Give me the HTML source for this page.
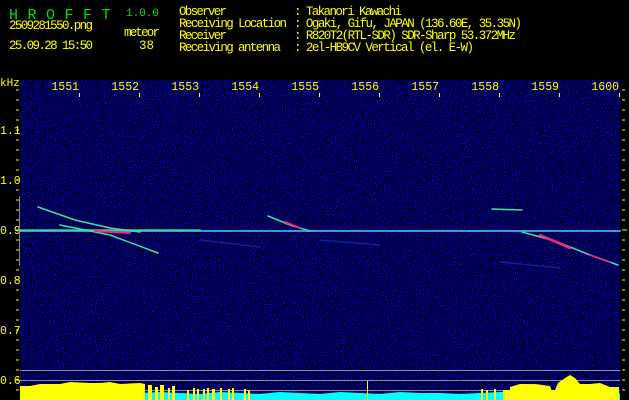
<!DOCTYPE html>
<html><head><meta charset="utf-8"><style>
html,body{margin:0;padding:0;background:#000;width:629px;height:400px;overflow:hidden}
svg{display:block}
text{font-family:"Liberation Mono","DejaVu Sans Mono",monospace}
</style></head><body>
<svg width="629" height="400" viewBox="0 0 629 400" xmlns="http://www.w3.org/2000/svg">
<defs>
<filter id="n" x="0" y="0" width="100%" height="100%">
<feTurbulence type="fractalNoise" baseFrequency="0.9" numOctaves="1" seed="3"/>
<feColorMatrix type="matrix" values="0 0 0 0 0  0 0 0 0 0  3.5 0 0 0 -1.65  0 0 0 0 1"/>
</filter>
</defs>
<rect width="629" height="400" fill="#000"/>
<rect x="20" y="80" width="600" height="320" filter="url(#n)"/>
<!-- header -->
<text x="9" y="19" fill="#00e000" font-size="15" letter-spacing="9.5">HROFFT</text>
<text x="126" y="16" fill="#00e000" font-size="11">1.0.0</text>
<g fill="#ffff00" font-size="12.5">
<text x="9" y="29" textLength="84">2509281550.png</text>
<text x="124" y="36" textLength="36">meteor</text>
<text x="9" y="49" textLength="84">25.09.28 15:50</text>
<text x="139" y="49">38</text>
<text x="179" y="15" textLength="48">Observer</text>
<text x="179" y="27" textLength="108">Receiving Location</text>
<text x="179" y="39" textLength="48">Receiver</text>
<text x="179" y="51" textLength="102">Receiving antenna</text>
<text x="294" y="15" textLength="108">: Takanori Kawachi</text>
<text x="294" y="27" textLength="228">: Ogaki, Gifu, JAPAN (136.60E, 35.35N)</text>
<text x="294" y="39" textLength="222">: R820T2(RTL-SDR) SDR-Sharp 53.372MHz</text>
<text x="294" y="51" textLength="180">: 2el-HB9CV Vertical (el. E-W)</text>
<text x="0" y="86" font-size="11">kHz</text>
</g>
<!-- freq labels -->
<g fill="#ffff00" font-size="11.5" text-anchor="end">
<text x="79" y="90">1551</text><text x="139" y="90">1552</text><text x="199" y="90">1553</text>
<text x="259" y="90">1554</text><text x="319" y="90">1555</text><text x="379" y="90">1556</text>
<text x="439" y="90">1557</text><text x="499" y="90">1558</text><text x="559" y="90">1559</text>
<text x="619" y="90">1600</text>
</g>
<g stroke="#ffff00" stroke-width="1">
<path d="M79.5 93v4M139.5 93v4M199.5 93v4M259.5 93v4M319.5 93v4M379.5 93v4M439.5 93v4M499.5 93v4M559.5 93v4M619.5 93v4"/>
<path d="M16 90h3M16 100h3M16 110h3M16 120h3M16 130h3M16 140h3M16 150h3M16 160h3M16 170h3M16 180h3M16 190h3M16 200h3M16 210h3M16 220h3M16 230h4M16 240h3M16 250h3M16 260h3M16 270h3M16 280h3M16 290h3M16 300h3M16 310h3M16 320h3M16 330h3M16 340h3M16 350h3M16 360h3M16 370h3M16 380h3M16 390h3"/>
<path d="M622 90h3M622 100h3M622 110h3M622 120h3M622 130h3M622 140h3M622 150h3M622 160h3M622 170h3M622 180h3M622 190h3M622 200h3M622 210h3M622 220h3M622 230h5M622 240h3M622 250h3M622 260h3M622 270h3M622 280h3M622 290h3M622 300h3M622 310h3M622 320h3M622 330h3M622 340h3M622 350h3M622 360h3M622 370h3M622 380h3M622 390h3"/>
</g>
<g fill="#ffff00" font-size="11.5">
<text x="0" y="134">1.1</text><text x="0" y="184">1.0</text><text x="0" y="234">0.9</text>
<text x="0" y="284">0.8</text><text x="0" y="334">0.7</text><text x="0" y="384">0.6</text>
</g>
<line x1="19.5" y1="196" x2="19.5" y2="266" stroke="#888" stroke-width="1"/>
<!-- meteor traces -->
<g fill="none" stroke-linecap="round">
<path d="M20 231H620" stroke="#40c0ff" stroke-width="2" opacity="0.8"/>
<path d="M20 230H200" stroke="#40ff80" stroke-width="2" opacity="0.6"/>
<path d="M38 207L75 220L110 228L140 232" stroke="#40e0a0" stroke-width="1.5"/>
<path d="M60 225L110 235L158 253" stroke="#40e0a0" stroke-width="1.5"/>
<path d="M95 231L130 233" stroke="#ff2080" stroke-width="2"/>
<path d="M268 216L290 225L310 231" stroke="#40e0a0" stroke-width="1.5"/>
<path d="M285 222L300 228" stroke="#ff2080" stroke-width="2"/>
<path d="M492 209L522 210" stroke="#40e0a0" stroke-width="1.5"/>
<path d="M522 232L555 241L590 255L618 265" stroke="#40e0a0" stroke-width="1.5"/>
<path d="M540 235L570 248" stroke="#ff2080" stroke-width="2.5"/>
<path d="M590 255L610 262" stroke="#ff2080" stroke-width="1.5"/>
<path d="M200 240L260 247M320 240L380 245M500 262L560 268" stroke="#2040d0" stroke-width="1.5" opacity="0.5"/>
</g>
<!-- gray lines -->
<g stroke="#909090" stroke-width="1">
<path d="M20 370.5H620M20 380.5H620M20 390.5H620"/>
</g>
<!-- bottom spectrum -->
<path d="M20 400V393L40 392L60 394L80 393L100 392L120 394L140 393L160 392L180 393L200 394L220 392L240 393L260 394L280 392L300 393L320 394L340 392L360 393L380 394L400 392L420 393L440 393L460 394L480 393L500 392L520 392L540 393L560 392L580 393L600 392L620 393V400Z" fill="#00ffff"/>
<path d="M20 400V386L30 386L40 384L60 384L70 382L90 383L100 383L110 382L120 384L140 383L145 384V400Z" fill="#ffff00"/>
<path d="M148 400V385h4v15zM155 400V387h3v13zM160 400V385h4v15zM168 400V388h2v12zM172 400V386h3v14z" fill="#ffff00"/>
<path d="M187 400V390h2v10zM193 400V388h2v12zM197 400V389h2v11zM203 400V389h2v11zM207 400V388h2v12zM212 400V389h3v11zM220 400V388h2v12zM228 400V389h2v11zM232 400V388h2v12zM244 400V389h2v11zM248 400V390h2v10z" fill="#ffff00"/>
<path d="M367 400V381h1v19zM481 400V389h2v11zM486 400V390h2v10zM494 400V389h2v11z" fill="#ffff00"/>
<path d="M503 400V390L510 390L510 387L520 384L530 384L545 386L550 390L555 390L558 383L565 378L570 375L575 378L580 384L590 384L600 383L610 387L619 387V400Z" fill="#ffff00"/>
<path d="M517 400V385L535 384L550 386L555 400Z" fill="#ffff00"/>
</svg>
</body></html>
